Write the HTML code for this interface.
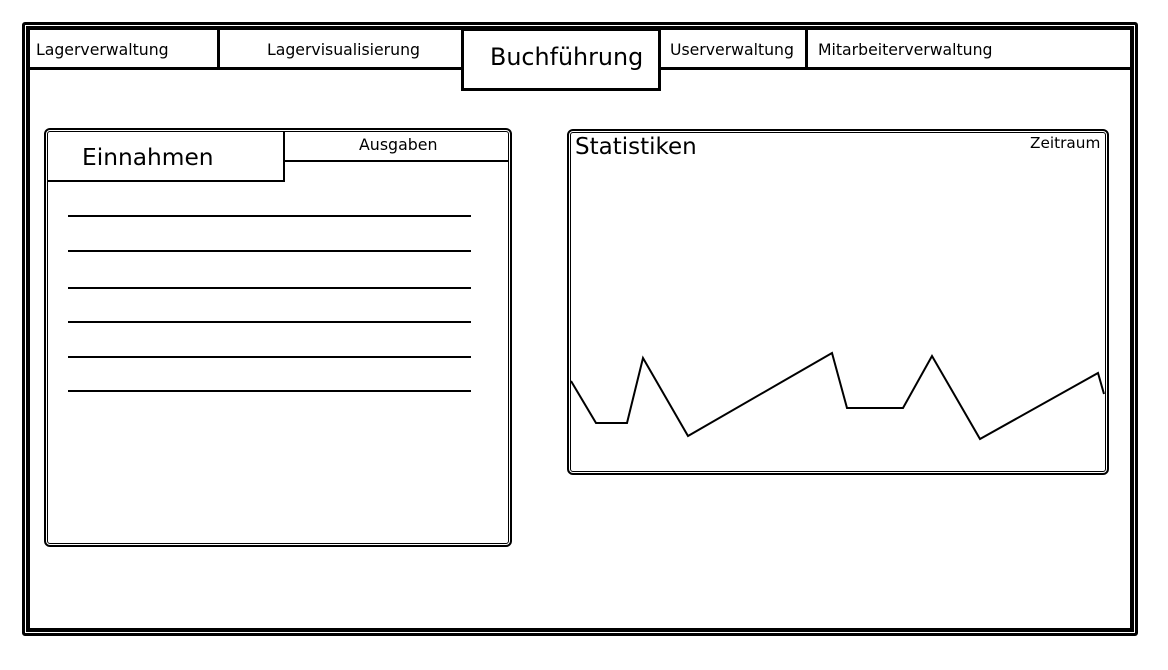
<!DOCTYPE html>
<html><head><meta charset="utf-8"><style>
*{margin:0;padding:0;box-sizing:border-box}
body{width:1168px;height:670px;background:#fff;position:relative;overflow:hidden;font-family:"DejaVu Sans","Liberation Sans",sans-serif;color:#000}
.a{position:absolute}
.t{position:absolute;white-space:nowrap;font-size:15.7px}
</style></head><body>
<div class="a" style="left:22px;top:22px;width:1116px;height:614px;border:3px solid #000;border-radius:3px"></div>
<div class="a" style="left:26px;top:26px;width:1108px;height:606px;border:4px solid #000"></div>
<div class="a" style="left:28px;top:67px;width:1104px;height:3px;background:#000"></div>
<div class="a" style="left:217px;top:29px;width:3px;height:40px;background:#000"></div>
<div class="a" style="left:805px;top:29px;width:3px;height:40px;background:#000"></div>
<div class="a" style="left:461px;top:28px;width:200px;height:63px;border:3px solid #000;background:#fff"></div>
<div class="t" style="left:36px;top:40px">Lagerverwaltung</div>
<div class="t" style="left:267px;top:40px">Lagervisualisierung</div>
<div class="t" style="left:490px;top:43px;font-size:23.8px">Buchführung</div>
<div class="t" style="left:670px;top:40px">Userverwaltung</div>
<div class="t" style="left:818px;top:40px">Mitarbeiterverwaltung</div>
<div class="a" style="left:44px;top:128px;width:468px;height:419px;border:2px solid #000;border-radius:6px"></div>
<div class="a" style="left:47px;top:131px;width:462px;height:413px;border:1px solid #000;border-radius:3px"></div>
<div class="a" style="left:47px;top:131px;width:238px;height:51px;border-right:2px solid #000;border-bottom:2px solid #000"></div>
<div class="a" style="left:285px;top:160px;width:223px;height:2px;background:#000"></div>
<div class="t" style="left:82px;top:144px;font-size:23.3px">Einnahmen</div>
<div class="t" style="left:359px;top:135px;font-size:15.8px">Ausgaben</div>
<div class="a" style="left:68px;top:215px;width:403px;height:2px;background:#000"></div>
<div class="a" style="left:68px;top:250px;width:403px;height:2px;background:#000"></div>
<div class="a" style="left:68px;top:287px;width:403px;height:2px;background:#000"></div>
<div class="a" style="left:68px;top:321px;width:403px;height:2px;background:#000"></div>
<div class="a" style="left:68px;top:356px;width:403px;height:2px;background:#000"></div>
<div class="a" style="left:68px;top:390px;width:403px;height:2px;background:#000"></div>
<div class="a" style="left:567px;top:129px;width:542px;height:346px;border:2px solid #000;border-radius:6px"></div>
<div class="a" style="left:570px;top:132px;width:536px;height:340px;border:1px solid #000;border-radius:3px"></div>
<div class="t" style="left:575px;top:134px;font-size:23px">Statistiken</div>
<div class="t" style="left:1030px;top:134px;font-size:15.3px">Zeitraum</div>
<svg class="a" style="left:0;top:0" width="1168" height="670"><polyline points="571,381 596,423 627,423 643,358 688,436 832,353 847,408 903,408 932,356 980,439 1098,373 1104,394" fill="none" stroke="#000" stroke-width="2"/></svg>
</body></html>
